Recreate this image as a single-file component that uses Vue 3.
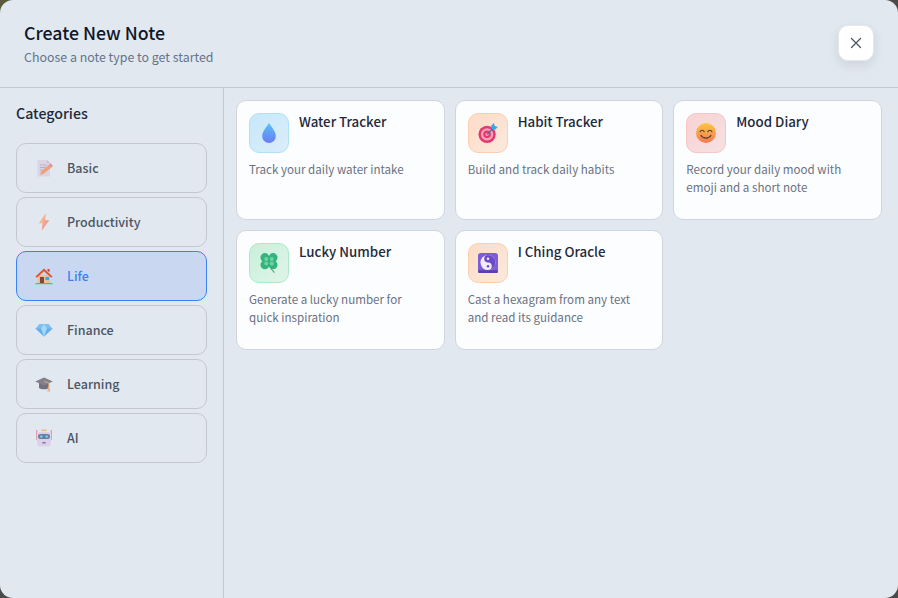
<script setup>
const categories = [
  { name: 'Basic', icon: 'memo' },
  { name: 'Productivity', icon: 'bolt' },
  { name: 'Life', icon: 'house', active: true },
  { name: 'Finance', icon: 'gem' },
  { name: 'Learning', icon: 'cap' },
  { name: 'AI', icon: 'robot' },
]
const notes = [
  { title: 'Water Tracker', desc: 'Track your daily water intake', tone: 'blue', icon: 'drop' },
  { title: 'Habit Tracker', desc: 'Build and track daily habits', tone: 'orange', icon: 'target' },
  { title: 'Mood Diary', desc: 'Record your daily mood with emoji and a short note', tone: 'red', icon: 'smile' },
  { title: 'Lucky Number', desc: 'Generate a lucky number for quick inspiration', tone: 'green', icon: 'clover' },
  { title: 'I Ching Oracle', desc: 'Cast a hexagram from any text and read its guidance', tone: 'orange', icon: 'yin' },
]
</script>

<template>
  <div class="stage">
    <div class="modal">
      <header class="head">
        <div>
          <h1 class="title">Create New Note</h1>
          <p class="sub">Choose a note type to get started</p>
        </div>
        <button class="close" aria-label="Close">
          <svg width="12" height="12" viewBox="0 0 12 12"><path d="M1.500 1.500l9 9M10.500 1.500l-9 9" stroke="#4b5563" stroke-width="1.300" stroke-linecap="round" fill="none"/></svg>
        </button>
      </header>
      <div class="body">
        <aside class="side">
          <h2 class="cat-title">Categories</h2>
          <div class="cat-list">
            <div v-for="c in categories" :key="c.name" class="cat" :class="{ on: c.active }">
              <svg class="cat-icon" :class="{ faded: !c.active }" viewBox="0 0 18 18">
                <g v-if="c.icon === 'memo'">
                  <path d="M2.500 1h9.500l3 3v13.500H2.500z" fill="#d6cfe2"/><path d="M12 1l3 3h-3z" fill="#b9b1c9"/>
                  <path d="M5 6h7M5 8.500h6M5 11h4" stroke="#a9a2b8" stroke-width="1"/>
                  <path d="M5 16l1.200-3.800 8-6.700 2.500 2.800-8 6.500z" fill="#f58a55"/><path d="M14.200 5.500l2.500 2.800 1.200-1.200-2.500-2.800z" fill="#ef5f6c"/>
                </g>
                <g v-else-if="c.icon === 'bolt'">
                  <path d="M10.500.5L3.800 10.200h4L6.800 17.500 14.200 7.200H10z" fill="#f7a86e"/><path d="M10.500.5L8.300 10.200h-.5L6.800 17.500 14.200 7.200H10z" fill="#f28a78"/>
                </g>
                <g v-else-if="c.icon === 'house'">
                  <path d="M3 8h12v8H3z" fill="#ecc096"/><path d="M.5 9.500L9 1.500l8.500 8-1.300 1.200L9 4.200 1.800 10.700z" fill="#e8502e"/>
                  <path d="M12.500 2h2v3.500l-2-1.800z" fill="#d4452a"/><path d="M5 10h4v6H5z" fill="#7a4a3a"/><path d="M10.500 10h3.500v3h-3.500z" fill="#3aa6e0"/>
                  <path d="M.5 16h17v1.200H.5z" fill="#4cc06a"/>
                </g>
                <g v-else-if="c.icon === 'gem'">
                  <path d="M4.500 3h9L17.500 7.500 9 15.500.5 7.500z" fill="#58b4f2"/><path d="M.5 7.500h17L9 15.500z" fill="#3f9ae8"/>
                  <path d="M6 7.500L9 3l3 4.500L9 15.500z" fill="#8dd4fa"/>
                </g>
                <g v-else-if="c.icon === 'cap'">
                  <path d="M4 8v5c1.500 1.700 8.500 1.700 10 0V8z" fill="#4f4a5a"/><path d="M.2 6.500L9 2.500l8.800 4L9 10.500z" fill="#635d70"/>
                  <path d="M9 6.500l4.800 1.500v4" stroke="#d9a441" stroke-width=".9" fill="none"/><path d="M13 11.500h1.600l.6 5h-2.800z" fill="#f0a070"/>
                </g>
                <g v-else>
                  <path d="M6.500.5h5v1.700h-5z" fill="#e8b54a"/><path d="M1.800 1v10M16.200 1v10" stroke="#ef5f85" stroke-width="1"/>
                  <rect x="2" y="3" width="14" height="14.500" rx="3.500" fill="#dcc8e8"/>
                  <rect x="3" y="5" width="12" height="5" rx="2.200" fill="#3f5f80"/>
                  <circle cx="6.300" cy="7.500" r="1.300" fill="#57c6f0"/><circle cx="11.700" cy="7.500" r="1.300" fill="#57c6f0"/>
                  <path d="M7.300 13h3.400v1.500H7.300z" fill="#5d5670"/>
                </g>
              </svg>
              <span>{{ c.name }}</span>
            </div>
          </div>
        </aside>
        <main class="grid">
          <article v-for="n in notes" :key="n.title" class="card">
            <div class="card-top">
              <div class="tile" :class="n.tone">
                <svg class="tile-icon" viewBox="0 0 22 22">
                  <g v-if="n.icon === 'drop'">
                    <defs><linearGradient id="dg" x1="0" y1="0" x2="0" y2="1"><stop offset="0" stop-color="#56c2f7"/><stop offset="1" stop-color="#6a7cf5"/></linearGradient></defs>
                    <path d="M11 0c2 3.800 7.500 8.800 7.500 14.500a7.500 7.500 0 0 1-15 0C3.500 8.800 9 3.800 11 0z" fill="url(#dg)"/>
                  </g>
                  <g v-else-if="n.icon === 'target'">
                    <circle cx="10" cy="12.500" r="9.500" fill="#e5386e"/><circle cx="10" cy="12.500" r="6.800" fill="#f4a4bb"/>
                    <circle cx="10" cy="12.500" r="4.200" fill="#e5386e"/><circle cx="10" cy="12.500" r="1.800" fill="#f4a4bb"/>
                    <path d="M10 12.500l8-8" stroke="#3a6ea8" stroke-width="1.300"/>
                    <path d="M14.500 3l3-3 .9 3.400 3.400.9-3 3-3.800-.5z" fill="#35a5ea"/>
                  </g>
                  <g v-else-if="n.icon === 'smile'">
                    <defs><linearGradient id="sg" x1="0" y1="0" x2="0" y2="1"><stop offset="0" stop-color="#fbc83f"/><stop offset="1" stop-color="#f2785a"/></linearGradient></defs>
                    <circle cx="11" cy="11" r="11" fill="url(#sg)"/>
                    <path d="M4.500 9.500c1.200-2 3.300-2 4.500 0M13 9.500c1.200-2 3.300-2 4.500 0M5.500 13.500c2.200 4.200 8.800 4.200 11 0" stroke="#5a3a2a" stroke-width="1.200" stroke-linecap="round" fill="none"/>
                  </g>
                  <g v-else-if="n.icon === 'clover'">
                    <path d="M11 12c1 3 3 7 6 9.500" stroke="#5f8a78" stroke-width="1.200" fill="none"/>
                    <g fill="#35b37e">
                      <circle cx="6.500" cy="5" r="4.900"/><circle cx="15.500" cy="5" r="4.900"/><circle cx="6.500" cy="13" r="4.900"/><circle cx="15.500" cy="13" r="4.900"/><circle cx="11" cy="9" r="4"/>
                    </g>
                    <g fill="#6cd3a5"><circle cx="8" cy="6.500" r="2.200"/><circle cx="14" cy="6.500" r="2.200"/><circle cx="8" cy="11.500" r="2.200"/><circle cx="14" cy="11.500" r="2.200"/></g>
                  </g>
                  <g v-else>
                    <rect x="0" y="0" width="22" height="22" rx="3" fill="#7d5dd6"/><rect x="0" y="19" width="22" height="3" rx="1.500" fill="#5c3fae"/>
                    <circle cx="11" cy="10.500" r="8.300" fill="#f1ecfb"/>
                    <path d="M11 2.200a8.300 8.300 0 0 1 0 16.600 4.150 4.150 0 0 0 0-8.300 4.150 4.150 0 0 1 0-8.300z" fill="#6d4bc6"/>
                    <circle cx="11" cy="6.400" r="1.400" fill="#f1ecfb"/><circle cx="11" cy="14.600" r="1.400" fill="#6d4bc6"/>
                  </g>
                </svg>
              </div>
              <h3 class="card-title">{{ n.title }}</h3>
            </div>
            <p class="card-desc">{{ n.desc }}</p>
          </article>
        </main>
      </div>
    </div>
  </div>
</template>

<style>
html, body { margin: 0; background: #4a4a48; }
</style>

<style scoped>
.stage { width: 898px; height: 598px; overflow: hidden; background: linear-gradient(135deg, #5c5a3c 0 12%, #4a4a48 12%); font-family: "Noto Sans CJK SC", "Noto Sans", sans-serif; }
.modal { width: 898px; height: 598px; border-radius: 13px; background: #e2e8f0; display: flex; flex-direction: column; overflow: hidden; }
.head { height: 88px; box-sizing: border-box; flex: none; display: flex; justify-content: space-between; align-items: center; padding: 0 24px 2px; border-bottom: 1px solid #c3c9d2; }
.title { margin: 0; font-size: 17.750px; font-weight: 500; line-height: 24px; color: #0f172a; }
.sub { margin: 4px 0 0; font-size: 12.400px; line-height: 18px; color: #64748b; }
.close { width: 36px; height: 36px; padding: 0; border: 1px solid #e2e8f0; border-radius: 10px; background: #fff; display: flex; align-items: center; justify-content: center; box-shadow: 0 4px 12px rgba(15, 23, 42, .1); }
.body { flex: 1; display: flex; min-height: 0; }
.side { width: 224px; flex: none; box-sizing: border-box; padding: 14px 16px 16px; border-right: 1px solid #c3c9d2; }
.cat-title { margin: 0 0 19px; font-size: 14.200px; font-weight: 500; line-height: 22px; color: #1e293b; }
.cat-list { display: flex; flex-direction: column; gap: 4px; }
.cat { height: 50px; box-sizing: border-box; display: flex; align-items: center; gap: 14px; padding: 0 15px 0 18px; border: 1px solid #c3c7d0; border-radius: 10px; font-size: 12.500px; font-weight: 500; color: #4b5563; }
.cat span { margin-top: -2px; }
.cat.on { background: #c9d8f0; border-color: #3b82f6; color: #3b82f6; }
.cat-icon { width: 18px; height: 18px; flex: none; }
.cat-icon.faded { opacity: .75; }
.grid { flex: 1; display: grid; grid-template-columns: repeat(3, 1fr); grid-auto-rows: 120px; gap: 10px; align-content: start; padding: 12px 16px 12px 12px; min-width: 0; }
.card { box-sizing: border-box; padding: 12px; background: #fcfdff; border: 1px solid #d1d5db; border-radius: 10px; }
.card-top { display: flex; gap: 10px; }
.tile { width: 40px; height: 40px; box-sizing: border-box; flex: none; border-radius: 10px; border: 1px solid; display: flex; align-items: center; justify-content: center; }
.tile.blue { background: linear-gradient(135deg, #c6e8fb, #dcedf9); border-color: #aee0f8; }
.tile.orange { background: linear-gradient(135deg, #fcdcc6, #fbe9dd); border-color: #fbcfae; }
.tile.red { background: linear-gradient(135deg, #f8d2d2, #f6e1e3); border-color: #f8c4c4; }
.tile.green { background: linear-gradient(135deg, #c8f0d9, #e0f4e9); border-color: #ade9c6; }
.tile-icon { width: 20px; height: 20px; }
.card-title { margin: -1px 0 0; font-size: 13.300px; font-weight: 500; line-height: 20px; color: #1e293b; }
.card-desc { margin: 7px 0 0; font-size: 11.600px; line-height: 18px; color: #6b7280; }
</style>
